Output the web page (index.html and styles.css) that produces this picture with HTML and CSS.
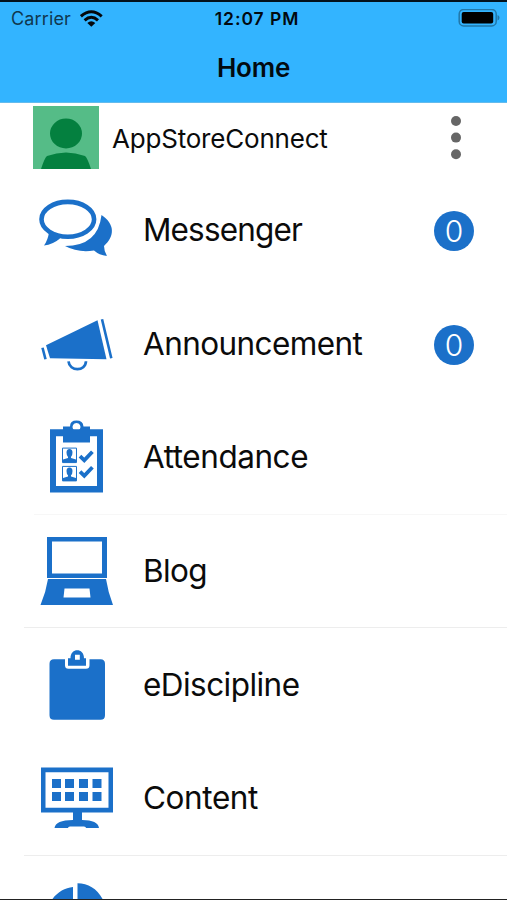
FILE: index.html
```html
<!DOCTYPE html>
<html lang="en">
<head>
<meta charset="utf-8">
<title>Home</title>
<link rel="stylesheet" href="styles.css">
</head>
<body>
<div class="screen">
  <header class="top">
    <div class="status">
      <div class="carrier"><span class="carrier-name">Carrier</span>
        <svg class="wifi" viewBox="80 8 23 18" width="23" height="18"><g fill="none" stroke="#05080c" stroke-width="3"><path d="M80.9 14.3Q91.3 5.1 101.7 14.3"/><path d="M84.6 18.3Q91.3 12.3 98 18.3"/></g><path fill="#05080c" d="M87.3 21Q91.3 17.7 95.3 21L91.3 24.8Z"/></svg>
      </div>
      <div class="time">12:07 PM</div>
      <svg class="battery" viewBox="458 8 42 19" width="42" height="19"><rect x="459.2" y="8.5" width="37" height="16.4" rx="4.5" fill="none" stroke="#2277a8" stroke-width="1.5"/><rect x="461.7" y="10.9" width="31.5" height="11.7" rx="2" fill="#000"/><path d="M497.5 14Q499.5 14.5 499.5 16.7T497.5 19.5Z" fill="#2277a8"/></svg>
    </div>
    <h1 class="title">Home</h1>
  </header>
  <section class="profile">
    <svg class="avatar" viewBox="0 0 66 63" width="66" height="63"><path fill="#55bc87" d="M0 0h66v63H0z"/><ellipse cx="33" cy="27.5" rx="16" ry="15" fill="#04803f"/><path fill="#04803f" d="M8 63Q12 51 14 50Q33 43 52 50Q54 51 58 63Z"/></svg>
    <div class="user">AppStoreConnect</div>
    <svg class="more" viewBox="0 0 12 46" width="12" height="46" fill="#666"><circle cx="6" cy="6" r="5"/><circle cx="6" cy="22.6" r="5"/><circle cx="6" cy="39.2" r="5"/></svg>
  </section>
  <main class="menu">
    <div class="row">
      <svg class="icon" viewBox="0 173 143 113.7"><path d="M101.5 215C115 224 115 236 104 246Q104 251 107 256Q99 255 94 250.5Q78 253 65 246Q98 246 101.5 215Z"/><ellipse cx="67.8" cy="219.3" rx="26.3" ry="17.4" fill="none" stroke="#1b70c9" stroke-width="4.6"/><path d="M49 232Q48 240 44 245.5Q53 244.5 60 238.5L57 233Z"/></svg>
      <div class="label messenger">Messenger</div><div class="badge">0</div>
    </div>
    <div class="row">
      <svg class="icon" viewBox="0 286.7 143 113.7"><path d="M46 345L97.5 320L106.5 359L50 358Z"/><path d="M42.5 347.5L45.5 359M102 319L111.3 358" fill="none" stroke="#1b70c9" stroke-width="2.6"/><path d="M68.5 361C69.5 371.5 85.5 371.5 86 361" fill="none" stroke="#1b70c9" stroke-width="2.7"/></svg>
      <div class="label announcement">Announcement</div><div class="badge">0</div>
    </div>
    <div class="row">
      <svg class="icon" viewBox="0 400.4 143 113.7"><path fill-rule="evenodd" d="M50 429.7h53V493H50ZM56 436.7v49.8h41v-49.8Z"/><path fill-rule="evenodd" d="M63 443V427h7Q70 421 76.5 421T83.5 427H90V443ZM76.5 423.3a4 4 0 1 0 .01 0Z"/><g id="person"><path fill="none" stroke="#1b70c9" stroke-width="1" d="M62.5 448.5h14v14.5h-14Z"/><path d="M66.5 453Q66.5 449.5 69.5 449.5T72.5 453Q72.5 456 71 457.3V458.5L76 460V463H63V460L68 458.5V457.3Q66.5 456 66.5 453Z"/></g><use href="#person" y="18.3"/><path fill="none" stroke="#1b70c9" stroke-width="3.8" d="M80 456.5L84.3 460.7L92.4 452.2M80 472L84.3 476.2L92.4 467.7"/></svg>
      <div class="label attendance">Attendance</div>
    </div>
    <div class="row line inset">
      <svg class="icon" viewBox="0 514.1 143 113.7"><path fill-rule="evenodd" d="M47 537h60V578H47ZM52 541.5V573.5H102V541.5Z"/><path fill-rule="evenodd" d="M48 579H106Q108 592 113 605H40.5Q46 592 48 579ZM64.5 588.5L63.5 597.5H90.5L89.5 588.5Z"/></svg>
      <div class="label blog">Blog</div>
    </div>
    <div class="row line">
      <svg class="icon" viewBox="0 627.8 143 113.7"><path d="M54 659H65V665Q65 668.5 68.5 668.5H86Q89.5 668.5 89.5 665V659H100.5Q105 659 105 663.5V715Q105 719.5 100.5 719.5H54Q49.5 719.5 49.5 715V663.5Q49.5 659 54 659Z"/><path fill-rule="evenodd" d="M68 665.5V658H70.5C70.5 647.5 84 647.5 84 658H86V665.5ZM75 654.5H79.8V659.5H75Z"/></svg>
      <div class="label discipline">eDiscipline</div>
    </div>
    <div class="row">
      <svg class="icon" viewBox="0 741.5 143 113.7"><path fill-rule="evenodd" d="M41 768H113V813H41ZM45.5 772.7V808.3H108.5V772.7Z"/><path d="M52 779.5h9v9h-9ZM65 779.5h9v9h-9ZM79 779.5h9v9h-9ZM92.5 779.5h9v9h-9ZM52 792.5h9v9h-9ZM65 792.5h9v9h-9ZM79 792.5h9v9h-9ZM92.5 792.5h9v9h-9ZM73 812.5h9V820.5Q98 820.5 99 828.5H86Q86 827 84 827H70Q68 827 68 828.5H54.5Q55.5 820.5 73 820.5Z"/></svg>
      <div class="label content">Content</div>
    </div>
    <div class="row line">
      <svg class="icon" viewBox="0 855.2 143 113.7"><path d="M73 887.3C62 888.5 52.5 895.5 47 909H73ZM77.5 883.5C89 884 98 889 104 902V910H77.5Z"/></svg>
    </div>
  </main>
</div>
</body>
</html>
```
FILE: styles.css
```css
* { box-sizing: border-box; }
body { margin: 0; background: #fff; font-family: Inter, "Liberation Sans", sans-serif; color: #0b0b0b; }
.screen { height: 900px; overflow: hidden; border-top: 2px solid #03121d; border-bottom: 1px solid #222; }
.top { height: 101px; background: #33b4ff; border-bottom: 1px solid #64bbed; color: #020a10; }
.status { display: grid; grid-template-columns: 1fr auto 1fr; align-items: center; height: 33px; padding: 0 7px 0 11px; }
.carrier { display: flex; align-items: center; gap: 9px; }
.carrier-name { font-size: 18px; letter-spacing: 0.15px; color: #10384f; }
.wifi { display: block; }
.time { font-size: 17.5px; font-weight: 600; letter-spacing: 0.95px; margin-left: 3px; }
.battery { justify-self: end; }
.title { margin: 17px 0 0; text-align: center; font-size: 26px; line-height: 32px; font-weight: 600; letter-spacing: -0.2px; }
.profile { display: flex; align-items: center; height: 70px; padding: 0 45px 0 33px; }
.avatar { margin-bottom: 2px; }
.user { margin-left: 13px; flex: 1; font-size: 26px; letter-spacing: -0.2px; }
.row { position: relative; display: flex; align-items: center; height: 113.7px; padding-right: 33px; }
.line::before { content: ""; position: absolute; top: -0.5px; left: 24px; right: 0; height: 1px; background: #ededed; }
.inset::before { top: 0; left: 34px; background: #f7f7f7; }
.icon { width: 143px; height: 113.7px; flex: none; fill: #1b70c9; }
.label { flex: 1; font-size: 31.5px; line-height: 40px; white-space: nowrap; }
.messenger { letter-spacing: -0.85px; }
.announcement { letter-spacing: -0.6px; }
.attendance { letter-spacing: -0.45px; }
.blog { letter-spacing: -0.6px; }
.discipline { letter-spacing: -0.55px; }
.content { letter-spacing: -0.4px; }
.badge { width: 40px; height: 40px; border-radius: 50%; background: #1b70c9; color: #fff; text-align: center; font-size: 30px; line-height: 40px; margin-top: 3px; font-weight: 300; }
```
